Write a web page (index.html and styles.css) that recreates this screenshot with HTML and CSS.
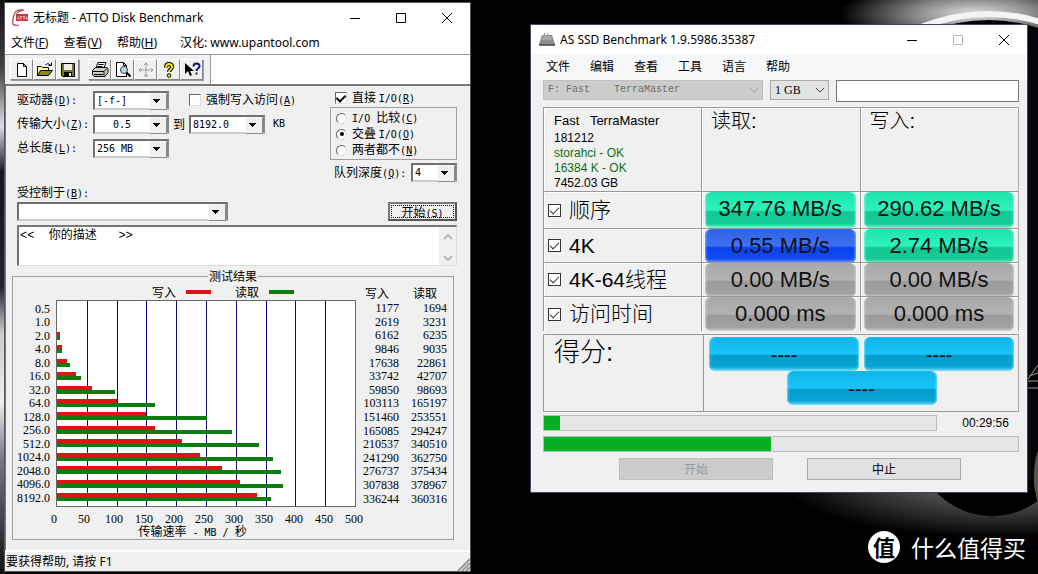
FILE: index.html
```html
<!DOCTYPE html>
<html lang="zh-CN">
<head>
<meta charset="utf-8">
<title>ATTO Disk Benchmark / AS SSD Benchmark</title>
<link rel="stylesheet" href="styles.css">
</head>
<body>
<div class="desktop">
  <svg class="wallpaper" viewBox="0 0 1038 574" preserveAspectRatio="none" aria-hidden="true">
    <defs>
      <radialGradient id="g1"><stop offset="0" stop-color="#e0e0e0"/><stop offset=".45" stop-color="#888"/><stop offset="1" stop-color="#000"/></radialGradient>
      <radialGradient id="g2"><stop offset="0" stop-color="#777"/><stop offset=".6" stop-color="#333"/><stop offset="1" stop-color="#000"/></radialGradient>
      <linearGradient id="g3" x1="0" y1="0" x2="0" y2="1"><stop offset="0" stop-color="#111"/><stop offset=".12" stop-color="#444"/><stop offset=".22" stop-color="#dcdce4"/><stop offset=".3" stop-color="#15151c"/><stop offset=".5" stop-color="#223"/><stop offset=".58" stop-color="#ccc"/><stop offset=".7" stop-color="#eee"/><stop offset=".8" stop-color="#778"/><stop offset="1" stop-color="#111"/></linearGradient>
    </defs>
    <rect width="1038" height="574" fill="#000"/>
    <rect width="5" height="574" fill="url(#g3)"/>
    <ellipse cx="975" cy="14" rx="135" ry="34" fill="url(#g1)"/>
    <path d="M918 28 Q985 2 1046 24" fill="none" stroke="#f4f4f6" stroke-width="6"/>
    <path d="M925 32 Q985 10 1038 28 V60 H925Z" fill="#000"/>
    <ellipse cx="1000" cy="480" rx="220" ry="58" fill="url(#g2)"/>
    <circle cx="992" cy="439" r="77" fill="#000"/>
    <rect x="1028" y="30" width="10" height="450" fill="#05050a"/>
    <path d="M1028 379l10-14M1028 381h10M1028 388h10M1029 376l9-3" stroke="#999" fill="none"/>
    <path d="M1038 450q-5 15-4 35l4 20z" fill="#55554f"/>
  </svg>

  <section class="window atto">
    <header class="titlebar">
      <svg class="app-icon" width="18" height="18" viewBox="0 0 18 18"><path d="M13 1Q4 0 3 6Q1 11 2 15Q4 17 8 16M13 1Q7 2 5 6" fill="none" stroke="#b5484a" stroke-width="1.2"/><rect x="5" y="5" width="12" height="7" fill="#c33c40"/><path d="M6.500 10.500l1-3 1 3M9 7.500h2.500M10 7.500v3M12 7.500h2M13 7.500v3M15 8h1v2h-1z" stroke="#f3d8d8" stroke-width=".7" fill="none"/></svg>
      <h1 class="title">无标题 - ATTO Disk Benchmark</h1>
      <div class="win-buttons">
        <button type="button" aria-label="最小化"><svg width="12" height="12"><path d="M1 6.500h10" stroke="#000"/></svg></button>
        <button type="button" aria-label="最大化"><svg width="12" height="12"><path d="M1.500 1.500h9v9h-9z" fill="none" stroke="#000"/></svg></button>
        <button type="button" aria-label="关闭"><svg width="12" height="12"><path d="M1 1l10 10M11 1L1 11" stroke="#000"/></svg></button>
      </div>
    </header>
    <nav class="menu">
      <button type="button">文件(<u>F</u>)</button>
      <button type="button">查看(<u>V</u>)</button>
      <button type="button">帮助(<u>H</u>)</button>
      <button type="button" class="credit">汉化: www.upantool.com</button>
    </nav>
    <div class="toolbar">
      <div class="tools">
        <button type="button" aria-label="新建"><svg width="18" height="18" viewBox="0 0 18 18"><path d="M4.500 2.500h6l3 3v10h-9zM10.500 2.500v3h3" fill="#fff" stroke="#000"/></svg></button>
        <button type="button" aria-label="打开"><svg width="18" height="18" viewBox="0 0 18 18"><path d="M1.500 14.500v-9h4l1 1h6v3" fill="#ffff9c" stroke="#000"/><path d="M1.500 14.500l3-5h12l-4 5z" fill="#8a8a18" stroke="#000"/><path d="M9.500 4q2-3 5 0M15.500 1.500v3h-3" fill="none" stroke="#000"/></svg></button>
        <button type="button" aria-label="保存"><svg width="18" height="18" viewBox="0 0 18 18"><path d="M2.500 2.500h13v13h-12l-1-1z" fill="#77771c" stroke="#000"/><path d="M5 3h8v6H5z" fill="#eee"/><path d="M5 11h8v4H5z" fill="#000"/><path d="M10 12h2v3h-2z" fill="#fff"/></svg></button>
      </div>
      <div class="tools">
        <button type="button" aria-label="打印"><svg width="18" height="18" viewBox="0 0 18 18"><path d="M5 7l2-5.500h8L13 7" fill="#fff" stroke="#000"/><path d="M7.500 3.500h5M6.500 5.500h5" stroke="#000"/><path d="M1.500 9.500l3-3h11l1.500 1v4l-3 4h-11l-1.500-2z" fill="#ccc" stroke="#000"/><path d="M2 10.500h11l3-3M3 13.500h9M13 10.500v4" stroke="#000" fill="none"/><path d="M9 12h2" stroke="#dd0"/></svg></button>
        <button type="button" aria-label="打印预览"><svg width="18" height="18" viewBox="0 0 18 18"><path d="M2.500 1.500h7l3 3v11h-10zM9.500 1.500v3h3" fill="#fff" stroke="#000"/><circle cx="10" cy="9" r="3.500" fill="#a8e0e0" stroke="#344"/><path d="M12.500 11.500l4 4" stroke="#000" stroke-width="2"/></svg></button>
        <button type="button" aria-label="移动" disabled><svg width="18" height="18" viewBox="0 0 18 18"><path d="M9 2v14M2 9h14M7 4l2-2 2 2M7 14l2 2 2-2M4 7L2 9l2 2M14 7l2 2-2 2" fill="none" stroke="#999"/></svg></button>
        <button type="button" aria-label="帮助"><svg width="18" height="18" viewBox="0 0 18 18"><path d="M6 6.500Q6 3 9 3t3 3q0 1.500-1.500 2.500T9 11" fill="none" stroke="#000" stroke-width="4"/><path d="M6 6.500Q6 3 9 3t3 3q0 1.500-1.500 2.500T9 11" fill="none" stroke="#f5e600" stroke-width="2"/><circle cx="9" cy="14.500" r="1.800" fill="#f5e600" stroke="#000"/></svg></button>
        <button type="button" aria-label="这是什么"><svg width="18" height="18" viewBox="0 0 18 18"><path d="M2 2v11l3-3 2 5 2-1-2-4h4z" fill="#000"/><path d="M10.500 5.500q0-3 3-3t3 2.500q0 1.500-1.500 2.500T13.500 10" fill="none" stroke="#10107c" stroke-width="2"/><path d="M12.500 11.500h2v2h-2z" fill="#10107c"/></svg></button>
      </div>
    </div>

    <form class="atto-body">
      <div class="settings">
        <div class="left-set">
          <label for="drive">驱动器<span class="m">(<u>D</u>):</span></label>
          <span class="combo"><select id="drive" class="m"><option>[-f-]</option></select></span>
          <label class="check wide"><input type="checkbox"><span>强制写入访问<span class="m">(<u>A</u>)</span></span></label>
          <label for="size">传输大小<span class="m">(<u>Z</u>):</span></label>
          <span class="combo"><select id="size" class="m indent"><option>0.5</option></select></span>
          <label for="size-to">到</label>
          <span class="combo"><select id="size-to" class="m"><option>8192.0</option></select></span>
          <span class="m unit">KB</span>
          <label for="length">总长度<span class="m">(<u>L</u>):</span></label>
          <span class="combo"><select id="length" class="m"><option>256 MB</option></select></span>
        </div>
        <div class="right-set">
          <label class="check direct"><input type="checkbox" checked><span>直接 <span class="m">I/O(<u>R</u>)</span></span></label>
          <div class="radios" role="radiogroup" aria-label="I/O 模式">
            <label class="check"><input type="radio" name="io"><span><span class="m">I/O </span>比较<span class="m">(<u>C</u>)</span></span></label>
            <label class="check"><input type="radio" name="io" checked><span>交叠 <span class="m">I/O(<u>O</u>)</span></span></label>
            <label class="check"><input type="radio" name="io"><span>两者都不<span class="m">(<u>N</u>)</span></span></label>
          </div>
          <div class="queue">
            <label for="queue">队列深度<span class="m">(<u>Q</u>):</span></label>
            <span class="combo"><select id="queue" class="m"><option>4</option></select></span>
          </div>
        </div>
      </div>
      <div class="control">
        <label for="ctrl">受控制于<span class="m">(<u>B</u>):</span></label>
        <div class="control-row">
          <span class="combo"><select id="ctrl"><option></option></select></span>
          <button type="button" class="start"><span>开始<span class="m">(S)</span></span></button>
        </div>
      </div>
      <div class="desc">
        <textarea aria-label="描述">&lt;&lt;  你的描述   &gt;&gt;</textarea>
        <div class="scroll"><svg width="10" height="6"><path d="M1 5l4-4 4 4" fill="none" stroke="#b8b8b8" stroke-width="2"/></svg><svg width="10" height="6"><path d="M1 1l4 4 4-4" fill="none" stroke="#b8b8b8" stroke-width="2"/></svg></div>
      </div>
      <fieldset class="results">
        <legend>测试结果</legend>
        <div class="chart">
          <div class="key">
            <span>写入</span><i class="swatch write"></i><span>读取</span><i class="swatch read"></i>
          </div>
          <div class="sizes num">
            <span>0.5</span><span>1.0</span><span>2.0</span><span>4.0</span><span>8.0</span><span>16.0</span><span>32.0</span><span>64.0</span><span>128.0</span><span>256.0</span><span>512.0</span><span>1024.0</span><span>2048.0</span><span>4096.0</span><span>8192.0</span>
          </div>
          <div class="plot">
            <div class="pair"></div>
            <div class="pair"></div>
            <div class="pair"><i class="write" style="width:.9%"></i><i class="read" style="width:.9%"></i></div>
            <div class="pair"><i class="write" style="width:1.6%"></i><i class="read" style="width:1.6%"></i></div>
            <div class="pair"><i class="write" style="width:3.3%"></i><i class="read" style="width:4.3%"></i></div>
            <div class="pair"><i class="write" style="width:6.5%"></i><i class="read" style="width:8.2%"></i></div>
            <div class="pair"><i class="write" style="width:11.6%"></i><i class="read" style="width:19.5%"></i></div>
            <div class="pair"><i class="write" style="width:20.2%"></i><i class="read" style="width:32.8%"></i></div>
            <div class="pair"><i class="write" style="width:30%"></i><i class="read" style="width:50.4%"></i></div>
            <div class="pair"><i class="write" style="width:32.8%"></i><i class="read" style="width:58.6%"></i></div>
            <div class="pair"><i class="write" style="width:41.8%"></i><i class="read" style="width:67.9%"></i></div>
            <div class="pair"><i class="write" style="width:48%"></i><i class="read" style="width:72.4%"></i></div>
            <div class="pair"><i class="write" style="width:55.2%"></i><i class="read" style="width:75%"></i></div>
            <div class="pair"><i class="write" style="width:61.4%"></i><i class="read" style="width:75.8%"></i></div>
            <div class="pair"><i class="write" style="width:67%"></i><i class="read" style="width:71.9%"></i></div>
          </div>
          <table class="values">
            <thead><tr><th>写入</th><th>读取</th></tr></thead>
            <tbody class="num">
              <tr><td>1177</td><td>1694</td></tr>
              <tr><td>2619</td><td>3231</td></tr>
              <tr><td>6162</td><td>6235</td></tr>
              <tr><td>9846</td><td>9035</td></tr>
              <tr><td>17638</td><td>22861</td></tr>
              <tr><td>33742</td><td>42707</td></tr>
              <tr><td>59850</td><td>98693</td></tr>
              <tr><td>103113</td><td>165197</td></tr>
              <tr><td>151460</td><td>253551</td></tr>
              <tr><td>165085</td><td>294247</td></tr>
              <tr><td>210537</td><td>340510</td></tr>
              <tr><td>241290</td><td>362750</td></tr>
              <tr><td>276737</td><td>375434</td></tr>
              <tr><td>307838</td><td>378967</td></tr>
              <tr><td>336244</td><td>360316</td></tr>
            </tbody>
          </table>
          <div class="axis num"><span>0</span><span>50</span><span>100</span><span>150</span><span>200</span><span>250</span><span>300</span><span>350</span><span>400</span><span>450</span><span>500</span></div>
          <div class="axis-title">传输速率<span class="m"> - MB / </span>秒</div>
        </div>
      </fieldset>
    </form>
    <footer class="status"><span>要获得帮助, 请按 F1</span><svg width="13" height="13"><path d="M1 13L13 1M5 13l8-8M9 13l4-4" stroke="#999" stroke-width="2"/></svg></footer>
  </section>

  <section class="window asssd">
    <header class="titlebar">
      <svg class="app-icon" width="16" height="16" viewBox="0 0 16 16"><path d="M3 3h10l3 9v2H0v-2z" fill="#8e8e8e"/><path d="M0 12h16v1.500H0z" fill="#555"/><path d="M5 1h1v3H5zM8 1h1v4H8z" fill="#999"/><path d="M4 4h8l1 4H3z" fill="#aaa"/></svg>
      <h1 class="title">AS SSD Benchmark 1.9.5986.35387</h1>
      <div class="win-buttons">
        <button type="button" aria-label="最小化"><svg width="12" height="12"><path d="M1 6.500h10" stroke="#000"/></svg></button>
        <button type="button" aria-label="最大化" disabled><svg width="12" height="12"><path d="M1.500 1.500h9v9h-9z" fill="none" stroke="#bbb"/></svg></button>
        <button type="button" aria-label="关闭"><svg width="12" height="12"><path d="M1 1l10 10M11 1L1 11" stroke="#000"/></svg></button>
      </div>
    </header>
    <nav class="menu">
      <button type="button">文件</button><button type="button">编辑</button><button type="button">查看</button><button type="button">工具</button><button type="button">语言</button><button type="button">帮助</button>
    </nav>
    <div class="as-body">
      <div class="pickers">
        <span class="flat drive off"><select aria-label="驱动器" disabled><option>F: Fast&nbsp;&nbsp;&nbsp; TerraMaster</option></select><svg width="10" height="6"><path d="M1 1l4 4 4-4" fill="none" stroke="#999"/></svg></span>
        <span class="flat"><select aria-label="测试大小"><option>1 GB</option></select><svg width="10" height="6"><path d="M1 1l4 4 4-4" fill="none" stroke="#444"/></svg></span>
        <input type="text" aria-label="名称">
      </div>
      <div class="board">
        <div class="cell info">
          <p class="name">Fast&nbsp;&nbsp; TerraMaster</p>
          <p>181212</p>
          <p class="ok">storahci - OK</p>
          <p class="ok">16384 K - OK</p>
          <p>7452.03 GB</p>
        </div>
        <div class="cell head">读取:</div>
        <div class="cell head">写入:</div>
        <div class="cell"><label class="test"><input type="checkbox" checked>顺序</label></div>
        <div class="cell"><output class="pill green">347.76 MB/s</output></div>
        <div class="cell"><output class="pill green">290.62 MB/s</output></div>
        <div class="cell"><label class="test"><input type="checkbox" checked>4K</label></div>
        <div class="cell"><output class="pill blue">0.55 MB/s</output></div>
        <div class="cell"><output class="pill green">2.74 MB/s</output></div>
        <div class="cell"><label class="test"><input type="checkbox" checked>4K-64线程</label></div>
        <div class="cell"><output class="pill">0.00 MB/s</output></div>
        <div class="cell"><output class="pill">0.00 MB/s</output></div>
        <div class="cell"><label class="test"><input type="checkbox" checked>访问时间</label></div>
        <div class="cell"><output class="pill">0.000 ms</output></div>
        <div class="cell"><output class="pill">0.000 ms</output></div>
      </div>
      <div class="score">
        <div class="score-label">得分:</div>
        <div class="score-pills">
          <output class="pill cyan">----</output><output class="pill cyan">----</output><output class="pill cyan total">----</output>
        </div>
      </div>
      <div class="progress-row">
        <div class="bar" role="progressbar" aria-label="当前测试"><i class="fill" style="width:4%"></i></div>
        <span class="time">00:29:56</span>
      </div>
      <div class="bar" role="progressbar" aria-label="总进度"><i class="fill" style="width:47.8%"></i></div>
      <div class="actions">
        <button type="button" disabled>开始</button>
        <button type="button">中止</button>
      </div>
    </div>
  </section>

  <div class="watermark"><span class="badge">值</span><span>什么值得买</span></div>
</div>
</body>
</html>
```

FILE: styles.css
```css
* { box-sizing: border-box; }
body { margin: 0; background: #000; color: #000; font: 12px/16px "Noto Sans", "Noto Sans CJK SC", sans-serif; }
button, select, input, textarea { font: inherit; color: inherit; margin: 0; border-radius: 0; }
button { padding: 0; border: 0; background: none; }
p, h1 { margin: 0; }
select { appearance: none; }
i { display: block; }

.desktop { position: relative; min-height: 100vh; overflow: hidden; }
.wallpaper { position: absolute; inset: 0; width: 100%; height: 100%; }
.window { position: absolute; background: #f0f0f0; display: flex; flex-direction: column; }
.atto { left: 4px; top: 2px; width: 45%; border: 1px solid #55555f; }
.asssd { left: 530px; top: 24px; width: 48%; border: 1px solid #4a4560; }

/* Title bars and menus */
.titlebar { display: flex; align-items: center; height: 29px; background: #fff; padding-left: 6px; }
.app-icon { flex: none; }
.title { font-size: 12px; font-weight: 400; margin-left: 4px; flex: 1; white-space: nowrap; }
.win-buttons { display: flex; }
.win-buttons button { width: 46px; height: 28px; display: grid; place-items: center; }
.menu { display: flex; background: #fff; white-space: nowrap; }
.atto .menu { height: 22px; padding-left: 6px; gap: 15px; }
.atto .credit { margin-left: 8px; }
.asssd .titlebar { padding-left: 8px; }
.asssd .title { margin-left: 5px; }
.asssd .menu { height: 26px; padding-left: 15px; gap: 20px; background: #f6f7f9; }

/* Toolbar */
.toolbar { display: flex; background: #fff; border-top: 1px solid #999; border-bottom: 2px solid #777; height: 32px; }
.tools { display: flex; padding: 4px 4px 4px 5px; background: #f0f0f0; }
.tools:last-child { border-right: 1px solid #999; padding-right: 7px; }
.tools button { width: 23px; height: 21px; display: grid; place-items: center; border: 1px solid; border-color: #fff #888 #888 #fff; box-shadow: 1px 1px #999; }

/* Classic dialog controls */
.m { font-family: "DejaVu Sans Mono", monospace; font-size: 10px; white-space: pre; }
.num { font-family: "Liberation Serif", serif; font-size: 12px; }
.atto-body { font-family: "Noto Sans CJK SC", sans-serif; padding: 2px 13px 10px 11px; border-left: 1px solid #777; display: flex; flex-direction: column; }
.combo { position: relative; display: block; height: 19px; background: #fff; border: 2px solid; border-color: #707070 #888 #ccc #707070; }
.combo select { display: block; width: 100%; height: 15px; padding: 0 16px 0 2px; border: 0; background: none; }
.combo select.indent { padding-left: 18px; }
.combo::after { content: ""; position: absolute; right: 0; top: 0; width: 16px; height: 15px; pointer-events: none; border: 1px solid; border-color: #f8f8f8 #888 #888 #f8f8f8; background: linear-gradient(#000, #000) 3px 5px / 7px 1px no-repeat, linear-gradient(#000, #000) 4px 6px / 5px 1px no-repeat, linear-gradient(#000, #000) 5px 7px / 3px 1px no-repeat, linear-gradient(#000, #000) 6px 8px / 1px 1px no-repeat, #f0f0f0; }
.settings { display: grid; grid-template-columns: 1fr 127px; }
.left-set { display: grid; grid-template-columns: 76px 76px 20px 76px 1fr; grid-auto-rows: 24px; align-items: center; align-content: start; white-space: nowrap; }
.left-set label[for="size-to"] { padding-left: 4px; }
.wide { grid-column: 3 / 6; padding-left: 20px; }
.unit { padding-left: 8px; }
.check { display: flex; align-items: center; gap: 5px; white-space: nowrap; }
.check input { appearance: none; flex: none; width: 12px; height: 12px; background: #fff; border: 1px solid; border-color: #666 #ddd #ddd #666; display: grid; place-items: center; }
.check input[type="checkbox"]:checked::after { content: ""; width: 4px; height: 7px; border: solid #000; border-width: 0 2px 2px 0; transform: rotate(45deg); margin-bottom: 2px; }
.check input[type="radio"] { width: 11px; height: 11px; border-radius: 50%; }
.check input[type="radio"]:checked::after { content: ""; width: 4px; height: 4px; border-radius: 50%; background: #000; }
.direct { padding-left: 5px; height: 19px; }
.radios { border: 1px solid #a0a0a0; padding: 2px 5px; height: 53px; display: grid; grid-template-rows: 1fr 1fr 1fr; align-items: center; }
.radios .check { line-height: 14px; }
.queue { display: flex; justify-content: space-between; align-items: center; padding-left: 4px; margin-top: 3px; }
.queue .combo { width: 46px; }
.control { padding-top: 2px; }
.control-row { display: flex; justify-content: space-between; align-items: center; }
.control-row .combo { width: 211px; }
.start { width: 69px; height: 19px; border: 2px solid; border-color: #777 #555 #555 #777; padding: 1px; }
.start > span { display: block; border: 1px dotted #000; line-height: 11px; height: 13px; }
.desc { display: flex; height: 41px; margin: 4px 0 2px; border: 1px solid; border-width: 2px 1px 1px 2px; border-color: #777 #ddd #ddd #777; background: #fff; }
.desc textarea { flex: 1; border: 0; background: none; resize: none; padding: 1px 0 0 1px; overflow: hidden; line-height: 16px; white-space: pre; font-family: "Liberation Mono", "Noto Sans CJK SC", monospace; }
.scroll { width: 17px; background: #f0f0f0; display: flex; flex-direction: column; justify-content: space-between; align-items: center; padding: 7px 0 4px; }

/* Results chart */
.results { margin: 0 3px 0 -5px; padding: 0; border: 1px solid #a0a0a0; min-width: 0; }
.results legend { margin: 0 auto; padding: 0 1px; line-height: 16px; }
.chart { display: grid; grid-template-columns: 43px 1fr 97px; grid-template-rows: 16px 207px auto auto; }
.key { grid-area: 1 / 2; display: flex; align-items: center; padding-left: 96px; gap: 10px; line-height: 14px; }
.swatch { width: 25px; height: 4px; }
.swatch.write { margin-right: 14px; }
.write { background: #dc1414; }
.read { background: #0c7c10; }
.sizes { grid-area: 2 / 1; display: grid; grid-auto-rows: 1fr; padding: 3px 6px 2px 0; text-align: right; line-height: 13px; }
.plot { grid-area: 2 / 2; display: grid; grid-auto-rows: 1fr; align-items: center; padding: 1px 0 2px; border: 1px solid #666; background: repeating-linear-gradient(90deg, transparent 0 calc(10% - 1px), #10107c calc(10% - 1px) 10%) 1px 0 no-repeat #fff; }
.pair i { height: 4px; }
.values { grid-area: 1 / 3 / 3 / 4; border-collapse: collapse; table-layout: fixed; width: 91px; height: 222px; text-align: right; }
.values th { font-weight: 400; padding: 0 10px 0 0; height: 18px; line-height: 14px; }
.values th:first-child { width: 43px; }
.values td { padding: 0; line-height: 13px; }
.axis { grid-area: 3 / 2; display: grid; grid-template-columns: repeat(11, 1fr); margin: 6px -13px 0 -17px; text-align: center; line-height: 12px; }
.axis-title { grid-area: 4 / 1 / 5 / 3; text-align: center; line-height: 12px; padding-left: 16px; }
.status { display: flex; justify-content: space-between; align-items: flex-end; border-top: 2px solid #fff; height: 21px; padding-left: 1px; line-height: 18px; }

/* AS SSD */
.as-body { font-family: "Liberation Sans", "Noto Sans CJK SC", sans-serif; padding: 0 8px 12px 12px; }
.pickers { display: flex; align-items: flex-start; gap: 7px; }
.flat { position: relative; display: block; width: 59px; font-family: "Liberation Serif", serif; }
.flat select { display: block; width: 100%; height: 20px; padding: 0 4px; border: 1px solid #aaa; background: #e3e3e3; opacity: 1; }
.flat.drive { width: 220px; font-family: "Liberation Mono", monospace; font-size: 10px; }
.flat.off select { background: #ccc; color: #6d6d6d; border-color: #c0c0c0; }
.flat svg { position: absolute; right: 4px; top: 7px; pointer-events: none; }
.pickers input { flex: 1; min-width: 0; height: 22px; border: 1px solid #777; background: #fff; }
.board { display: grid; grid-template-columns: 158px 1fr 1fr; grid-template-rows: 84px 37px 34px 34px 35px; margin: 5px 0 0; border-right: 1px solid #aaa; }
.cell { border-top: 1px solid #999; border-left: 1px solid #999; box-shadow: inset 1px 1px #fff; padding: 0 4px 0 3px; display: grid; min-width: 0; }
.cell.info { padding: 4px 0 0 10px; display: block; line-height: 15px; }
.info .name { font-size: 13px; line-height: 18px; margin-bottom: 1px; }
.ok { color: #0c700c; }
.cell.head { font-size: 20px; line-height: 26px; font-weight: 300; padding-left: 9px; }
.test { display: flex; align-items: center; gap: 8px; font-size: 21px; font-weight: 300; padding-left: 1px; line-height: 30px; white-space: nowrap; }
.test input { appearance: none; width: 13px; height: 13px; border: 1px solid #333; background: #fff; display: grid; place-items: center; }
.test input:checked::after { content: ""; width: 4px; height: 8px; border: solid #333; border-width: 0 1px 1px 0; transform: rotate(45deg); margin-bottom: 2px; }
.pill { display: block; align-self: stretch; border-radius: 6px; text-align: center; font-size: 22px; line-height: 34px; color: #111; background: linear-gradient(#a8a8a8, #b2b2b2 50%, #9b9b9b 55%, #a2a2a2 90%, #d0d0d0); box-shadow: inset 2px 0 2px -1px #ccc, inset -2px 0 2px -1px #ccc; }
.pill.green { background: linear-gradient(#1fe2ac, #2cf3bd 50%, #12c995 55%, #15cc98 88%, #7cf4d2); box-shadow: inset 2px 0 2px -1px #7cf4d2, inset -2px 0 2px -1px #7cf4d2; }
.pill.blue { background: linear-gradient(#2e62e4, #4070f4 50%, #0c41ee 55%, #104cf0 88%, #80a4f8); box-shadow: inset 2px 0 2px -1px #80a4f8, inset -2px 0 2px -1px #80a4f8; }
.pill.cyan { font-size: 20px; line-height: 36px; background: linear-gradient(#10b4e6, #18c4fa 50%, #049ccc 55%, #08a4d4 88%, #7ce0fc); box-shadow: inset 2px 0 2px -1px #6cdcfc, inset -2px 0 2px -1px #6cdcfc; }
.score { display: grid; grid-template-columns: 160px 1fr; margin-top: 3px; height: 78px; border: 1px solid #999; border-right-color: #aaa; }
.score-label { font-size: 26px; line-height: 34px; font-weight: 300; padding-left: 10px; border-right: 1px solid #999; }
.score-pills { display: grid; grid-template-columns: 1fr 1fr; grid-template-rows: 34px 34px; column-gap: 5px; padding: 2px 4px 0 5px; }
.total { grid-column: 1 / 3; justify-self: center; width: 150px; }
.progress-row { display: flex; justify-content: space-between; align-items: center; margin: 3px 0 5px; }
.bar { flex: 1; height: 16px; border: 1px solid #bbb; background: #e6e6e6; }
.fill { height: 14px; background: #06b025; }
.time { width: 82px; padding-left: 25px; }
.actions { display: flex; justify-content: center; gap: 34px; margin-top: 6px; padding-left: 18px; font-family: "Noto Sans CJK SC", sans-serif; }
.actions button { width: 154px; height: 22px; background: #e1e1e1; border: 1px solid #adadad; }
.actions button:disabled { background: #ccc; color: #999; border-color: #bfbfbf; }

.watermark { position: absolute; right: 12px; bottom: 11px; display: flex; align-items: center; gap: 11px; color: #fff; font: 23px/32px "Noto Sans CJK SC", sans-serif; }
.badge { width: 32px; height: 32px; border-radius: 50%; background: #fff; color: #000; text-align: center; font-size: 22px; line-height: 31px; font-weight: 700; }
```
